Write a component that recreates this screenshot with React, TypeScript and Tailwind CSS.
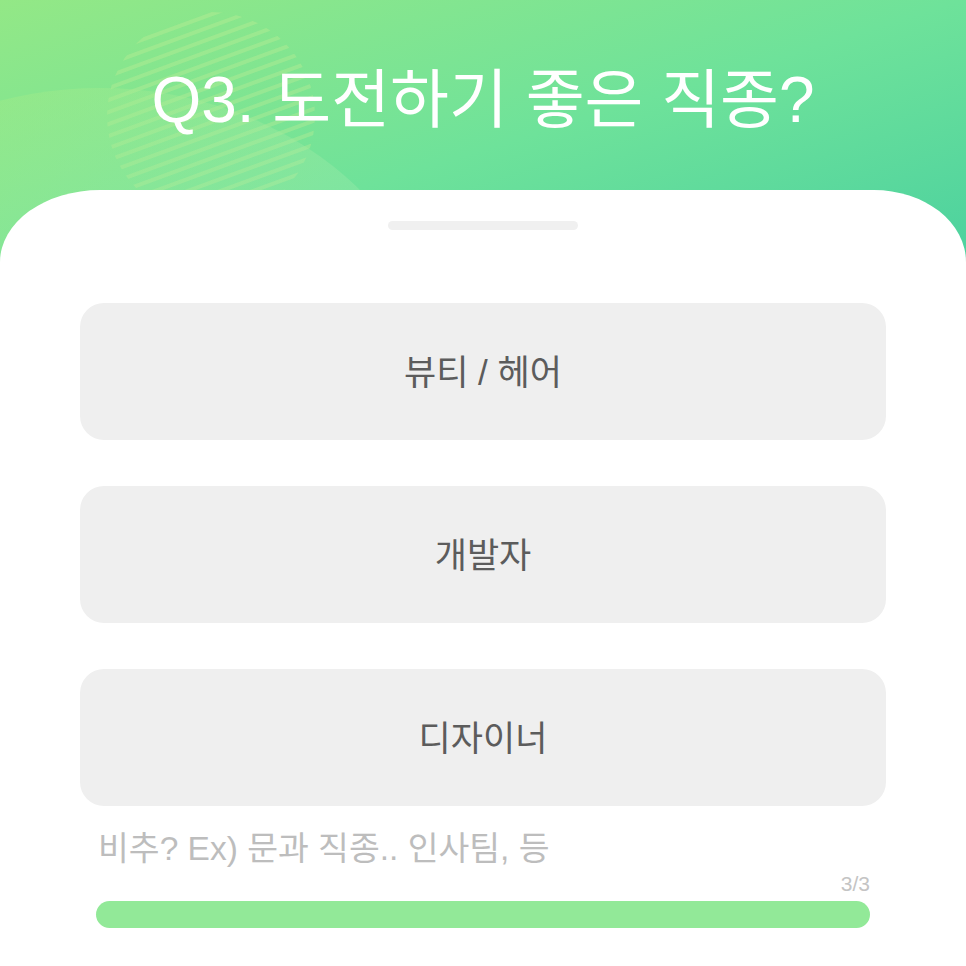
import React from 'react';

const options = ['뷰티 / 헤어', '개발자', '디자이너'];

function StripedCircle() {
  return (
    <svg className="absolute left-[105px] top-[12px]" width="212" height="200" viewBox="0 0 212 200">
      <defs>
        <clipPath id="circ">
          <circle cx="106" cy="104" r="104" />
        </clipPath>
      </defs>
      <g clipPath="url(#circ)">
        {Array.from({ length: 26 }).map((_, i) => (
          <line
            key={i}
            x1={-40}
            y1={i * 12 + 20}
            x2={260}
            y2={i * 12 - 90}
            stroke="#c4ef96"
            strokeOpacity="0.35"
            strokeWidth="4"
          />
        ))}
      </g>
    </svg>
  );
}

export default function App() {
  return (
    <div
      className="relative w-[966px] h-[966px] overflow-hidden bg-white"
      style={{ fontFamily: '"Liberation Sans", "Noto Sans CJK KR", sans-serif' }}
    >
      {/* Header */}
      <div className="absolute inset-x-0 top-0 h-[300px] bg-gradient-to-br from-[#93e886] via-[#6ee29a] to-[#45cf9f] overflow-hidden">
        <StripedCircle />
        <div className="absolute left-[-246px] top-[88px] w-[692px] h-[600px] rounded-[50%] bg-gradient-to-br from-[#a3ec74]/45 via-[#a8ecae]/30 to-[#c0f2d0]/20" />
      </div>

      <div className="relative flex flex-col">
        <h1 className="h-[190px] flex items-center justify-center pt-[10px] text-white text-[64px] font-normal">
          Q3. 도전하기 좋은 직종?
        </h1>

        {/* Card */}
        <div className="bg-white rounded-tl-[100px_72px] rounded-tr-[92px_72px] h-[776px] flex flex-col items-center">
          <div className="mt-[31px] w-[190px] h-[9px] rounded-full bg-[#f0f0f0]" />

          <div className="mt-[73px] w-[806px] flex flex-col gap-[46px]">
            {options.map((o) => (
              <button
                key={o}
                className="h-[137px] rounded-[24px] bg-[#efefef] flex items-center justify-center pt-[3px] text-[35px] font-normal text-[#5c5c5c]"
              >
                {o}
              </button>
            ))}
          </div>

          <div className="w-[806px] mt-[23px] pl-[18px] text-[33.5px] leading-[40px] text-[#bdbdbd]">
            비추? Ex) 문과 직종.. 인사팀, 등
          </div>

          <div className="w-[774px] mt-[4px] flex justify-end text-[21px] leading-[22px] text-[#c4c4c4] pr-[0px]">
            3/3
          </div>
          <div className="w-[774px] mt-[6px] h-[27px] rounded-full bg-[#92e998]" />
        </div>
      </div>
    </div>
  );
}
